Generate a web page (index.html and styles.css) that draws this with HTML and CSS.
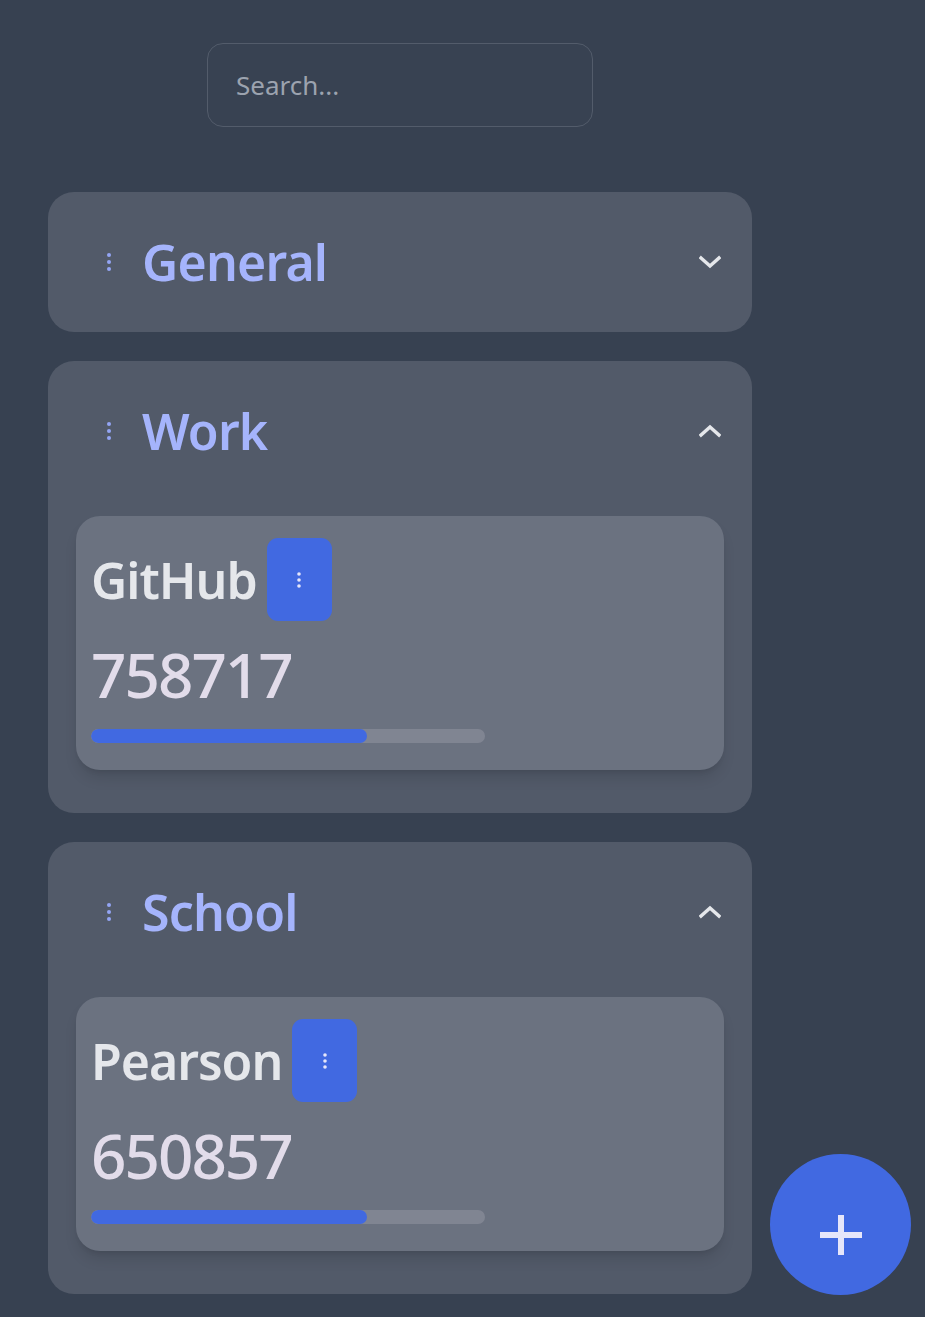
FILE: index.html
```html
<!DOCTYPE html>
<html lang="en">
<head>
<meta charset="utf-8">
<title>Counters</title>
<link rel="stylesheet" href="styles.css">
</head>
<body>
<main class="main">
  <div class="search-wrap">
    <input class="search" type="text" placeholder="Search...">
  </div>
  <div class="sections">
    <section class="section">
      <div class="section-header">
        <svg class="handle" width="6" height="20" viewBox="0 0 6 20"><circle cx="3" cy="3" r="2"/><circle cx="3" cy="10" r="2"/><circle cx="3" cy="17" r="2"/></svg>
        <h2 class="section-title">General</h2>
        <svg class="chevron" width="22" height="14" viewBox="0 0 22 14"><polyline points="2,3 11,11 20,3"/></svg>
      </div>
    </section>
    <section class="section">
      <div class="section-header">
        <svg class="handle" width="6" height="20" viewBox="0 0 6 20"><circle cx="3" cy="3" r="2"/><circle cx="3" cy="10" r="2"/><circle cx="3" cy="17" r="2"/></svg>
        <h2 class="section-title">Work</h2>
        <svg class="chevron" width="22" height="14" viewBox="0 0 22 14"><polyline points="2,11 11,3 20,11"/></svg>
      </div>
      <div class="section-body">
        <div class="item">
          <div class="item-head">
            <span class="item-name">GitHub</span>
            <button class="menu-btn"><svg width="6" height="18" viewBox="0 0 6 18"><circle cx="3" cy="3" r="1.8"/><circle cx="3" cy="9" r="1.8"/><circle cx="3" cy="15" r="1.8"/></svg></button>
          </div>
          <div class="item-value">758717</div>
          <div class="progress"><div class="progress-fill" style="width:70%"></div></div>
        </div>
      </div>
    </section>
    <section class="section">
      <div class="section-header">
        <svg class="handle" width="6" height="20" viewBox="0 0 6 20"><circle cx="3" cy="3" r="2"/><circle cx="3" cy="10" r="2"/><circle cx="3" cy="17" r="2"/></svg>
        <h2 class="section-title">School</h2>
        <svg class="chevron" width="22" height="14" viewBox="0 0 22 14"><polyline points="2,11 11,3 20,11"/></svg>
      </div>
      <div class="section-body">
        <div class="item">
          <div class="item-head">
            <span class="item-name">Pearson</span>
            <button class="menu-btn"><svg width="6" height="18" viewBox="0 0 6 18"><circle cx="3" cy="3" r="1.8"/><circle cx="3" cy="9" r="1.8"/><circle cx="3" cy="15" r="1.8"/></svg></button>
          </div>
          <div class="item-value">650857</div>
          <div class="progress"><div class="progress-fill" style="width:70%"></div></div>
        </div>
      </div>
    </section>
  </div>
</main>
<button class="fab" aria-label="Add"><svg width="42" height="40" viewBox="0 0 42 40"><rect x="0" y="17" width="42" height="6"/><rect x="18" y="0" width="6" height="40"/></svg></button>
</body>
</html>
```

FILE: styles.css
```css
* { box-sizing: border-box; }

html, body {
  margin: 0;
  padding: 0;
  background: #374151;
}

body {
  font-family: "Noto Sans", "Open Sans", sans-serif;
  min-height: 1317px;
}

.main {
  width: 704px;
  margin-left: 48px;
  padding-top: 43px;
  padding-bottom: 25px;
}

.search-wrap {
  display: flex;
  justify-content: center;
  margin-bottom: 65px;
}

.search {
  width: 386px;
  height: 84px;
  border: 1px solid #535c6b;
  border-radius: 16px;
  background: #384252;
  padding: 0 28px;
  font-family: "Noto Sans", sans-serif;
  font-size: 26px;
  color: #e5e7eb;
  outline: none;
}

.search::placeholder {
  color: #9ca3af;
}

.sections {
  display: flex;
  flex-direction: column;
  gap: 29px;
}

.section {
  background: #525a69;
  border-radius: 26px;
}

.section-header {
  height: 140px;
  display: flex;
  align-items: center;
  padding: 0 31px 0 58px;
}

.handle {
  fill: #94a5f5;
  flex: none;
}

.section-title {
  margin: 0 0 0 30px;
  flex: 1;
  font-size: 50px;
  font-weight: 600;
  color: #a5b4fc;
  line-height: 1;
  letter-spacing: -0.8px;
}

.chevron {
  fill: none;
  stroke: #e5e7eb;
  stroke-width: 3.4;
  stroke-linecap: square;
  flex: none;
}

.section-body {
  padding: 15px 28px 43px;
}

.item {
  background: #6b7280;
  border-radius: 24px;
  padding: 22px 15px 27px;
  box-shadow: 0 10px 15px -3px rgba(0, 0, 0, 0.12), 0 4px 6px -4px rgba(0, 0, 0, 0.12);
}

.item-head {
  display: flex;
  align-items: center;
  height: 83px;
}

.item-name {
  font-size: 50px;
  line-height: 1;
  color: #e5e7eb;
  font-weight: 600;
  letter-spacing: -1px;
}

.menu-btn {
  width: 65px;
  height: 83px;
  margin-left: 10px;
  border: none;
  border-radius: 11px;
  background: #4169e1;
  display: flex;
  align-items: center;
  justify-content: center;
  padding: 0;
}

.menu-btn svg {
  fill: #e6e6fa;
}

.item-value {
  margin-top: 23px;
  font-size: 62px;
  line-height: 61px;
  height: 61px;
  font-weight: 500;
  color: #e2dcea;
  letter-spacing: -2px;
}

.progress {
  margin-top: 24px;
  width: 394px;
  height: 14px;
  border-radius: 7px;
  background: #808592;
  overflow: hidden;
}

.progress-fill {
  height: 100%;
  background: #4169e1;
  border-radius: 7px;
}

.fab {
  position: fixed;
  right: 14px;
  bottom: 22px;
  width: 141px;
  height: 141px;
  border-radius: 50%;
  border: none;
  background: #4169e1;
  display: flex;
  align-items: center;
  justify-content: center;
  padding: 20px 0 0 0;
}

.fab svg {
  fill: #e6e6fa;
}
```
